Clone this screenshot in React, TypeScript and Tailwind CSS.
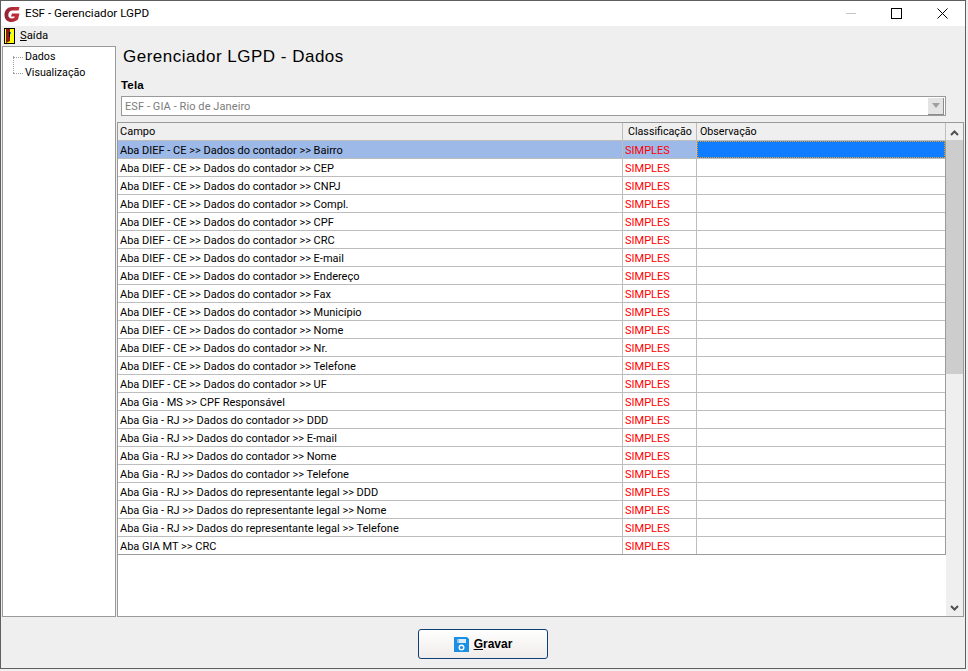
const sans = { fontFamily: 'Roboto, "Liberation Sans", Arial, sans-serif' };
const lib = { fontFamily: '"Liberation Sans", Arial, sans-serif' };

const base = "Aba DIEF - CE >> Dados do contador >> ";
const rows: string[] = [
  ...["Bairro","CEP","CNPJ","Compl.","CPF","CRC","E-mail","Endereço","Fax","Município","Nome","Nr.","Telefone","UF"].map((s) => base + s),
  "Aba Gia - MS >> CPF Responsável",
  "Aba Gia - RJ >> Dados do contador >> DDD",
  "Aba Gia - RJ >> Dados do contador >> E-mail",
  "Aba Gia - RJ >> Dados do contador >> Nome",
  "Aba Gia - RJ >> Dados do contador >> Telefone",
  "Aba Gia - RJ >> Dados do representante legal >> DDD",
  "Aba Gia - RJ >> Dados do representante legal >> Nome",
  "Aba Gia - RJ >> Dados do representante legal >> Telefone",
  "Aba GIA MT >> CRC",
];

function Logo() {
  return (
    <svg width="16" height="17" viewBox="0 0 16 17" className="shrink-0 mt-[2px]">
      <defs>
        <linearGradient id="lg" x1="0" y1="0" x2="1" y2="0">
          <stop offset="0" stopColor="#8e2233" />
          <stop offset="1" stopColor="#c9303a" />
        </linearGradient>
      </defs>
      <path d="M15.5 1H8C3.5 1 .5 4.5 .5 9C.5 13.5 3.5 16 7.5 16C10 16 12 15 14 13.5L15.5 7.5H8L7 10.5H10.7L10.2 12C9.5 12.3 8.6 12.5 7.8 12.5C5.5 12.5 4.3 11 4.3 9C4.3 6.3 6 4.5 8.5 4.5H14.7Z" fill="url(#lg)" />
    </svg>
  );
}

function ExitIcon() {
  return (
    <svg width="11" height="16" viewBox="0 0 11 16" className="shrink-0">
      <rect x="0" y="0" width="11" height="16" fill="#000" />
      <rect x="1" y="1" width="9" height="14" fill="#ffff00" />
      <path d="M2 1H6V13L2 15Z" fill="#8b1a12" />
      <rect x="5" y="4" width="1" height="5" fill="#000" />
      <rect x="6" y="4" width="1" height="2" fill="#00a0e0" />
    </svg>
  );
}

function SaveIcon() {
  return (
    <svg width="15" height="15" viewBox="0 0 15 15" className="shrink-0">
      <path d="M0 0H13L15 2V15H0Z" fill="#1a8fe3" />
      <rect x="3" y="2" width="9" height="4" fill="#d8ecfa" />
      <rect x="3" y="2" width="2" height="4" fill="#8fc6ef" />
      <circle cx="7.5" cy="10.5" r="2.3" fill="none" stroke="#fff" strokeWidth="1.4" />
    </svg>
  );
}

function Row({ text, selected }: { text: string; selected: boolean }) {
  return (
    <div className="flex h-[18px] border-b border-[#bdbdbd] last:border-[#9a9a9a]">
      <div className={`w-[505px] shrink-0 border-r border-[#bdbdbd] pl-[2px] text-[11px] leading-[19px] text-black whitespace-nowrap overflow-hidden ${selected ? "bg-[#9db9e8]" : "bg-white"}`}>
        {text}
      </div>
      <div className={`w-[74px] shrink-0 border-r border-[#bdbdbd] pl-[2px] text-[11px] leading-[19px] text-[#ff0000] overflow-hidden ${selected ? "bg-[#9db9e8]" : "bg-white"}`}>
        SIMPLES
      </div>
      <div className={`flex-1 ${selected ? "bg-[#107cff] border border-dotted border-[#e8a020]" : "bg-white"}`} />
    </div>
  );
}

export default function App() {
  return (
    <div className="w-[968px] h-[671px] bg-[#f0f0f0] overflow-hidden" style={sans}>
      <div className="w-[966px] h-[669px] border border-[#5f5f5f] bg-[#efefef] flex flex-col">
        {/* title bar */}
        <div className="h-[25px] shrink-0 bg-white flex items-center pl-[3px]">
          <Logo />
          <span className="ml-[5px] text-[11.7px] text-black">ESF - Gerenciador LGPD</span>
          <div className="ml-auto flex items-center">
            <div className="w-[10px] h-px bg-[#c4c4c4] mr-[35px]" />
            <div className="w-[11px] h-[11px] border border-black mr-[35px]" />
            <svg width="11" height="11" viewBox="0 0 11 11" className="mr-[17px]">
              <path d="M.5.5l10 10M10.5.5l-10 10" stroke="#000" strokeWidth="1" fill="none" />
            </svg>
          </div>
        </div>
        {/* menu */}
        <div className="h-[20px] shrink-0 flex items-center pl-[3px]">
          <ExitIcon />
          <span className="ml-[5px] text-[11.3px] text-black"><span className="underline">S</span>aída</span>
        </div>
        {/* body */}
        <div className="flex h-[571px] shrink-0 pl-[1px]">
          <div className="w-[114px] shrink-0 border border-[#9a9a9a] bg-white pt-[2px] relative text-[10.7px] text-black">
            <div className="absolute left-[10px] top-[9px] h-[17px] border-l border-dotted border-[#a0a0a0]" />
            <div className="h-[16px] leading-[16px] flex items-center">
              <span className="w-[10px] ml-[10px] border-t border-dotted border-[#a0a0a0]" />
              <span className="ml-[2px]">Dados</span>
            </div>
            <div className="h-[16px] leading-[16px] flex items-center">
              <span className="w-[10px] ml-[10px] border-t border-dotted border-[#a0a0a0]" />
              <span className="ml-[2px]">Visualização</span>
            </div>
          </div>
          <div className="flex-1 flex flex-col pl-[1px] min-w-0">
            <div className="h-[32px] pl-[6px] text-[17px] leading-[22px] tracking-[0.5px] text-black" style={lib}>Gerenciador LGPD - Dados</div>
            <div className="h-[15px] pl-[4px] text-[11.5px] leading-[15px] font-bold tracking-[0.2px] text-black" style={lib}>Tela</div>
            <div className="ml-[4px] mr-[19px] mt-[3px] h-[20px] bg-white border border-[#9a9a9a] flex items-center pl-[3px] pr-px text-[11px] tracking-[0.08px] text-[#7c7c7c] shrink-0">
              <span className="pt-[2px]">ESF - GIA - Rio de Janeiro</span>
              <div className="ml-auto w-[16px] h-[17px] bg-[#e4e4e4] border-r border-b border-[#8c8c8c] flex items-center justify-center">
                <div className="w-0 h-0 border-l-[4px] border-r-[4px] border-t-[5px] border-l-transparent border-r-transparent border-t-[#a0a0a0]" />
              </div>
            </div>
            <div className="mt-[6px] mr-[1px] flex-1 border border-[#9a9a9a] bg-white flex min-h-0">
              <div className="w-[828px] shrink-0 flex flex-col">
                <div className="flex h-[18px] bg-[#efefef] border-b border-r border-[#bdbdbd] text-[11px] leading-[17px] text-black">
                  <div className="w-[505px] shrink-0 border-r border-[#bdbdbd] pl-[2px]">Campo</div>
                  <div className="w-[74px] shrink-0 border-r border-[#bdbdbd] pl-[5px] whitespace-nowrap text-[10.7px]">Classificação</div>
                  <div className="flex-1 pl-[3px] text-[10.7px]">Observação</div>
                </div>
                <div className="border-r border-[#9a9a9a]">
                  {rows.map((r, i) => (
                    <Row key={i} text={r} selected={i === 0} />
                  ))}
                </div>
              </div>
              <div className="w-[17px] shrink-0 bg-[#efefef] flex flex-col items-center relative">
                <svg width="9" height="6" viewBox="0 0 9 6" className="mt-[7px] shrink-0">
                  <path d="M1 5L4.5 1.5 8 5" stroke="#505050" strokeWidth="2" fill="none" />
                </svg>
                <div className="w-full h-[234px] mt-[4px] bg-[#cdcdcd] shrink-0" />
                <svg width="9" height="6" viewBox="0 0 9 6" className="mt-auto mb-[5px] shrink-0">
                  <path d="M1 1L4.5 4.5 8 1" stroke="#505050" strokeWidth="2" fill="none" />
                </svg>
              </div>
            </div>
          </div>
        </div>
        {/* footer */}
        <div className="flex-1 flex justify-center items-start pt-[12px]">
          <button className="w-[130px] h-[30px] rounded-[3px] border border-[#0f3f78] bg-gradient-to-b from-white to-[#efecea] flex items-center justify-center gap-[5px] text-[12px] font-bold text-black" style={lib}>
            <SaveIcon />
            <span><span className="underline">G</span>ravar</span>
          </button>
        </div>
      </div>
    </div>
  );
}
